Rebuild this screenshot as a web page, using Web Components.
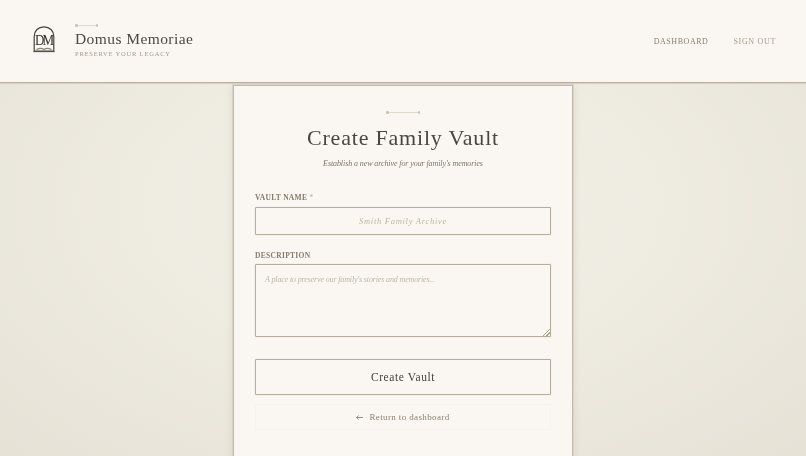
<!doctype html>
<html lang="en"><head><meta charset="utf-8"><title>Domus Memoriae</title>
<style>
html,body{margin:0;height:100%;}
body{height:456px;overflow:hidden;font-family:"Liberation Serif",serif;background:radial-gradient(ellipse 75% 80% at 50% 45%,#f2efe7 0%,#eeebe1 45%,#e5e1d5 100%);}
</style></head><body>
<dm-app></dm-app>
<script>
function def(name,html){
  const t=document.createElement('template');t.innerHTML=html;
  customElements.define(name,class extends HTMLElement{
    connectedCallback(){ if(!this.shadowRoot){this.attachShadow({mode:'open'}).appendChild(t.content.cloneNode(true));} }
  });
}
def('dm-ornament',`<style>:host{display:flex;align-items:center;width:var(--w,34px);height:3px}
i{width:2.5px;height:2.5px;border-radius:50%;background:#cbc4b6;flex:none}b{flex:1;height:1px;background:#dfd9cd}</style><i></i><b></b><i></i>`);
def('dm-logo',`<style>:host{display:block;width:22px;height:27px}svg{display:block}</style>
<svg width="22" height="27" viewBox="0 0 22 27" fill="none">
<path d="M1.2 25V10.5C1.2 4.8 5.2 .8 11 .8S20.8 4.8 20.8 10.5V25Z" stroke="#46423c" stroke-width="1.2"/>
<path d="M.4 25.6H21.6" stroke="#55504a" stroke-width="1.1"/>
<text x="11.8" y="19" text-anchor="middle" font-family="Liberation Serif" font-size="14.5" letter-spacing="-2" fill="#35312d" transform="scale(.9 1)">DM</text>
<path d="M3.5 23.6c2.6-1.4 5.6-1.4 7.5 0 1.9-1.4 4.9-1.4 7.5 0" stroke="#8d8577" stroke-width="1.2"/>
</svg>`);
def('dm-header',`<style>:host{display:flex;align-items:center;height:83px;box-sizing:border-box;border-bottom:1px solid #b9b2a3;background:#faf7f2;padding:0 30px 0 33px;box-shadow:0 1px 1px #d8d3c6}
.brand{display:flex;align-items:center;gap:20px;margin-top:-4px}
.text{display:flex;flex-direction:column;margin-top:4px}
dm-ornament{--w:23px;margin-bottom:2px}
.name{font-size:15.5px;line-height:20px;letter-spacing:.42px;color:#4c4843}
.tag{font-size:6.5px;line-height:9px;margin-top:0;letter-spacing:.8px;color:#a29a8c}
nav{margin-left:auto;display:flex;gap:25px}
a{font-size:8px;letter-spacing:.55px;color:#8c8273;text-decoration:none}a+a{color:#a49c8e;letter-spacing:.68px}
</style><div class="brand"><dm-logo></dm-logo><div class="text"><dm-ornament></dm-ornament><div class="name">Domus Memoriae</div><div class="tag">PRESERVE YOUR LEGACY</div></div></div>
<nav><a href="#">DASHBOARD</a><a href="#">SIGN OUT</a></nav>`);
def('dm-form',`<style>:host{display:block}
.f{display:flex;flex-direction:column}
input,textarea{display:block;box-sizing:border-box;width:100%;border:1px solid #b5ad9e;border-radius:1px;background:#faf7f2;font-family:"Liberation Serif",serif;font-style:italic;color:#4a4540;outline:none;margin:0;box-shadow:0 0 1px rgba(150,140,120,.55)}
input{height:28px;font-size:8.5px;letter-spacing:.72px;text-align:center;padding:0 8px}
textarea{height:73px;font-size:8px;letter-spacing:-.14px;line-height:14px;padding:8px 9px;resize:vertical}
textarea::-webkit-resizer{background:linear-gradient(135deg,transparent 45%,#a9a192 45%,#a9a192 55%,transparent 55%,transparent 70%,#a9a192 70%,#a9a192 80%,transparent 80%) right bottom/7px 7px no-repeat}
::placeholder{color:#bdb6a9;opacity:1}
label{display:block;font-size:7.5px;line-height:10px;letter-spacing:.3px;color:#857a6b;margin-bottom:4px;font-weight:bold}
label span{color:#bcb09c;font-weight:normal}
label+textarea{margin-top:-1px}
button{display:block;width:100%;height:36px;margin-top:22px;box-sizing:border-box;border:1px solid #b5ad9e;border-radius:1px;background:#faf7f2;font:11.5px "Liberation Serif",serif;letter-spacing:.6px;color:#45413c;box-shadow:0 0 1px rgba(150,140,120,.55)}
.back{display:flex;justify-content:center;align-items:center;gap:6px;height:26px;margin-top:9px;border:1px solid #f6f3ed;box-sizing:border-box;color:#8c8273;font-size:9px;letter-spacing:.37px;text-decoration:none}
.back svg{display:block}
</style><div class="f">
<label for="n">VAULT NAME <span>*</span></label>
<input id="n" placeholder="Smith Family Archive">
<label for="d" style="margin-top:16px">DESCRIPTION</label>
<textarea id="d" placeholder="A place to preserve our family's stories and memories..."></textarea>
<button type="button">Create Vault</button>
<a class="back" href="#"><svg width="7" height="5" viewBox="0 0 7 5" fill="none" stroke="#7c7264" stroke-width=".8"><path d="M7 2.5H.6M2.6.6.6 2.5l2 1.9"/></svg>Return to dashboard</a>
</div>`);
def('dm-card',`<style>:host{display:block;width:340px;box-sizing:border-box;margin:2px auto 0;border:1px solid #c2bbab;outline:1px solid #d9d4c7;background:#faf7f2;padding:25px 21px 0;box-shadow:0 2px 8px rgba(120,110,90,.18);height:374px}
.head{display:flex;flex-direction:column;align-items:center;text-align:center;margin-bottom:23px}
dm-ornament{margin-bottom:9px}
h1{margin:0;font-weight:normal;font-size:22px;line-height:30px;letter-spacing:.8px;color:#4a4641}
p{margin:5px 0 0;font-size:8px;line-height:12px;font-style:italic;letter-spacing:-.09px;color:#7f7566}
</style><div class="head"><dm-ornament></dm-ornament><h1>Create Family Vault</h1><p>Establish a new archive for your family's memories</p></div><dm-form></dm-form>`);
def('dm-app',`<style>:host{display:block;height:456px;overflow:hidden;will-change:transform}</style><dm-header></dm-header><dm-card></dm-card>`);
</script></body></html>
